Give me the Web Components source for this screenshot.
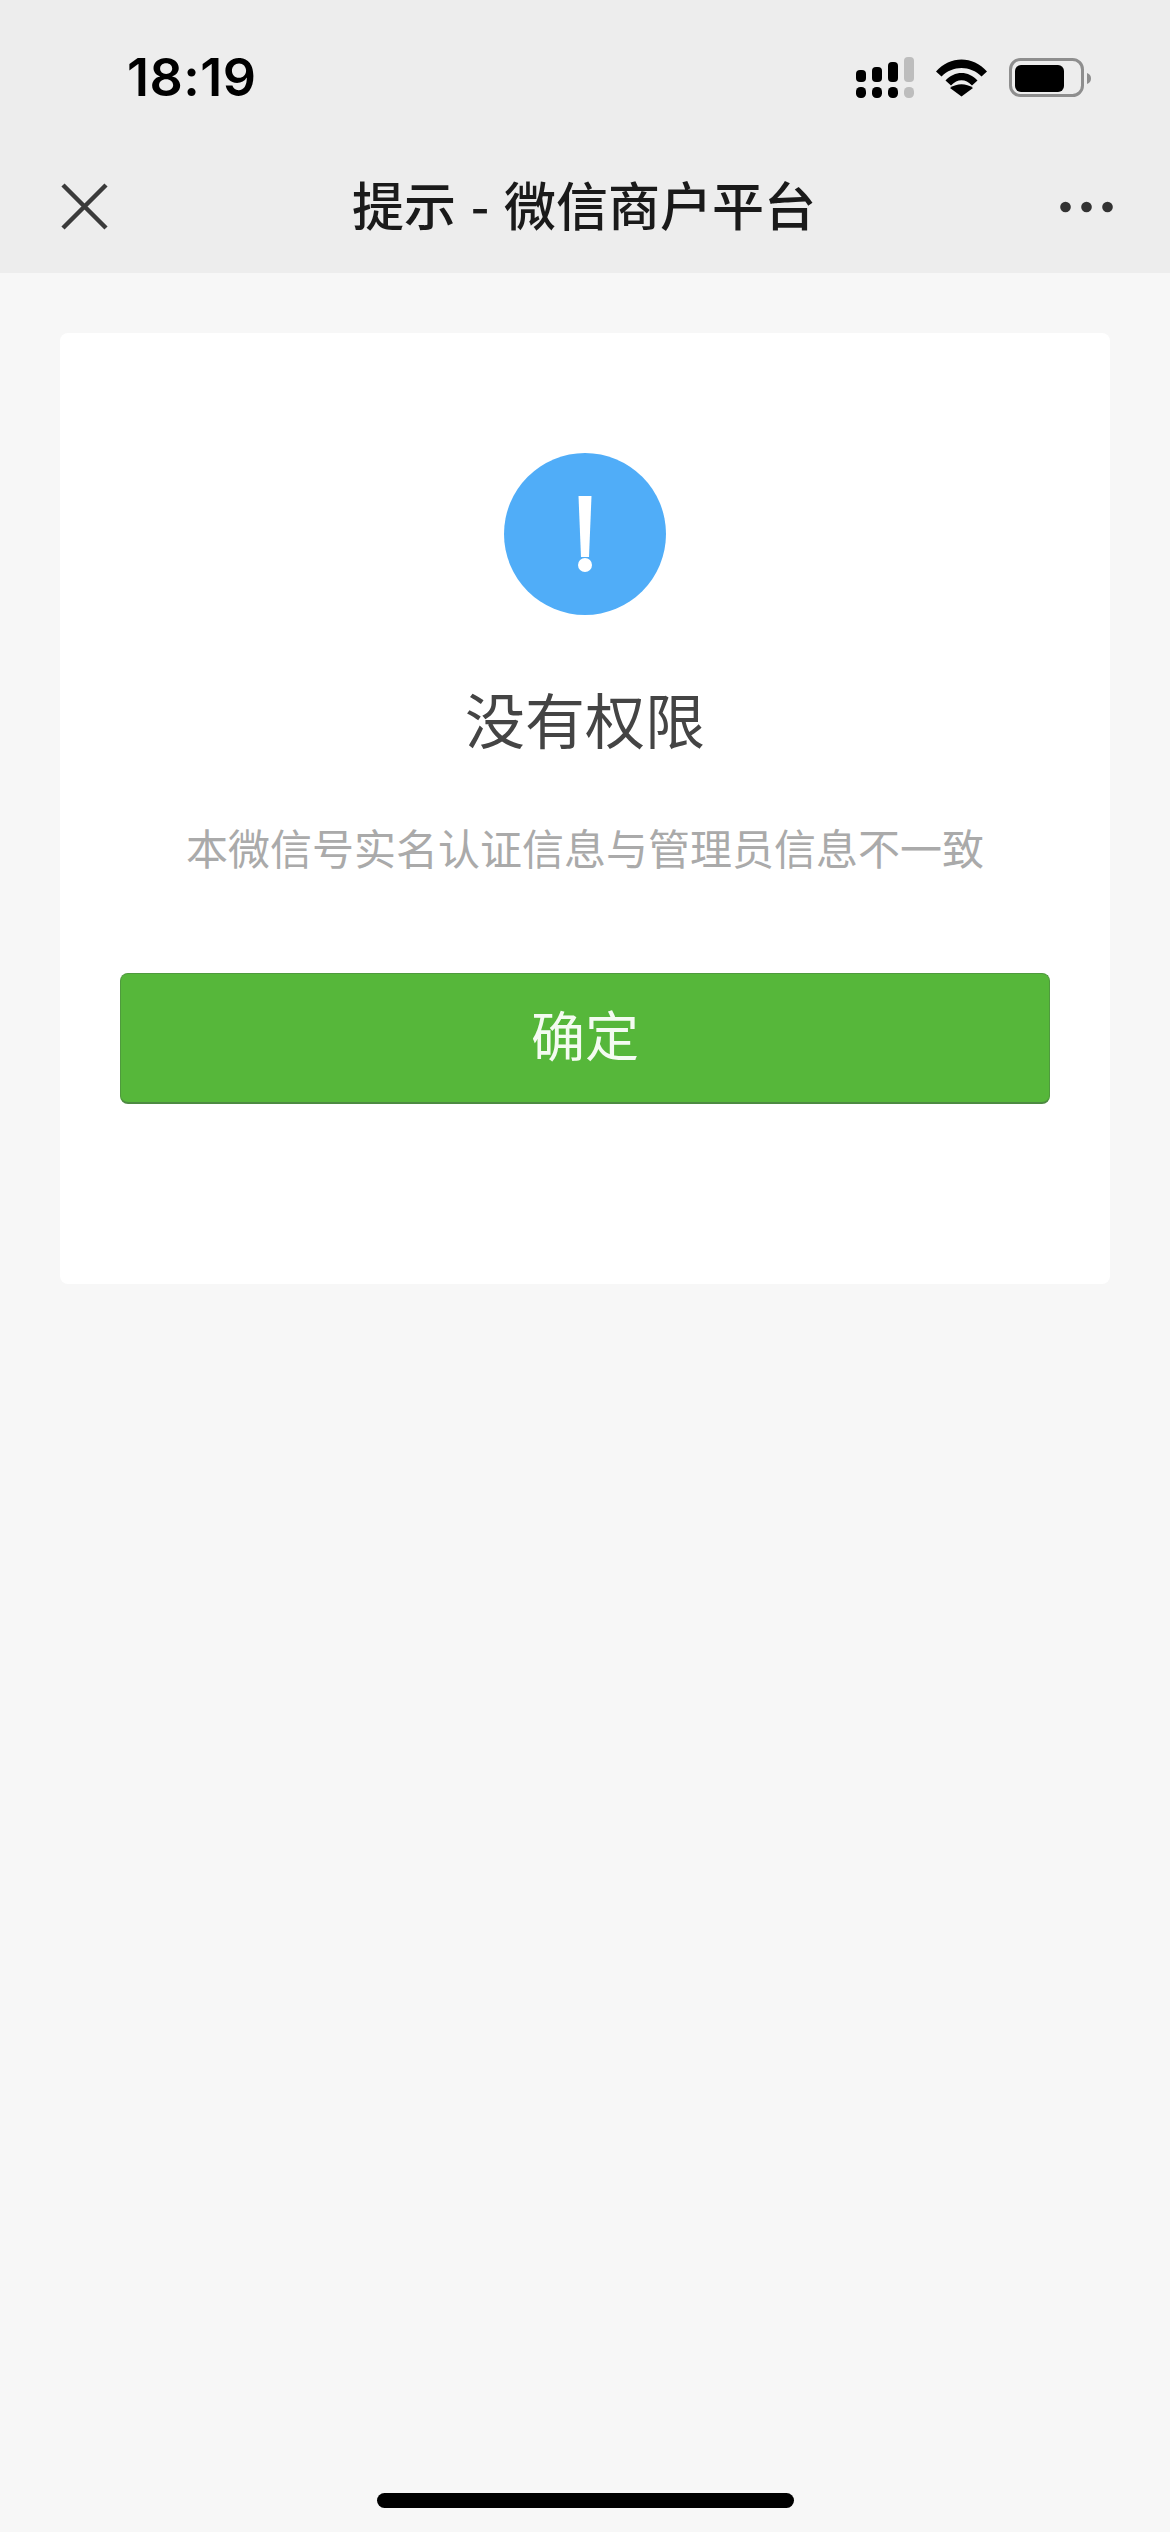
<!DOCTYPE html>
<html lang="zh-CN">
<head>
<meta charset="utf-8">
<title>提示 - 微信商户平台</title>
<style>
    html, body { margin: 0; padding: 0; background: #f7f7f7; }
    body { font-family: Inter, "Noto Sans CJK SC", sans-serif; }
</style>
</head>
<body>
<wx-page>
    <wx-status-bar slot="top" time="18:19"></wx-status-bar>
    <wx-nav-bar slot="top">提示 - 微信商户平台</wx-nav-bar>
    <wx-msg-card heading="没有权限">
        本微信号实名认证信息与管理员信息不一致
        <wx-button slot="action">确定</wx-button>
    </wx-msg-card>
</wx-page>

<script>
class WxPage extends HTMLElement {
    constructor() {
        super();
        const shadow = this.attachShadow({ mode: 'open' });
        shadow.innerHTML = `
        <style>
            :host { display: flex; flex-direction: column; min-height: 2532px; background: #f7f7f7; }
            #top { background: #ededed; height: 273px; display: flex; flex-direction: column; }
            #main { flex: 1; padding: 60px 60px 0; }
            #home { display: flex; justify-content: center; padding-bottom: 24px; }
            #home div { width: 417px; height: 15px; border-radius: 8px; background: #000; }
        </style>
        <div id="top"><slot name="top"></slot></div>
        <div id="main"><slot></slot></div>
        <div id="home"><div></div></div>
        `;
    }
}

class WxStatusBar extends HTMLElement {
    constructor() {
        super();
        const shadow = this.attachShadow({ mode: 'open' });
        shadow.innerHTML = `
        <style>
            :host { display: flex; align-items: flex-start; justify-content: space-between; height: 150px; padding: 0 79px 0 127px; }
            #time { font: 600 52px/52px Inter, sans-serif; color: #000; margin-top: 52px; letter-spacing: 0.5px; }
            #icons { display: flex; gap: 22px; margin-top: 57px; }
            svg { display: block; }
        </style>
        <div id="time">${this.getAttribute('time')}</div>
        <div id="icons">
            <svg width="58" height="41" viewBox="0 0 58 41">
                <rect x="0" y="13" width="10" height="12" rx="4"/>
                <rect x="16" y="10" width="10" height="15" rx="4"/>
                <rect x="32" y="5" width="10" height="20" rx="4"/>
                <rect x="48" y="0" width="10" height="25" rx="4" fill="#bdbdbd"/>
                <rect x="0" y="30" width="10" height="11" rx="4.5"/>
                <rect x="16" y="30" width="10" height="11" rx="4.5"/>
                <rect x="32" y="30" width="10" height="11" rx="4.5"/>
                <rect x="48" y="30" width="10" height="11" rx="4.5" fill="#bdbdbd"/>
            </svg>
            <svg width="51" height="41" viewBox="0 0 51 41" style="margin-top:2px">
                <path d="M0 12.5 C14 -3.5 37 -3.5 51 12.5 L45.5 17.5 C34.5 6 16.5 6 5.500 17.500 Z"/>
                <path d="M9.500 21.500 C18.500 11.500 32.500 11.500 41.500 21.500 L36 26.500 C29.500 19.500 21.500 19.500 15 26.500 Z"/>
                <path d="M25.500 37.500 L14 29 C21 24 30 24 37 29 Z" />
            </svg>
            <svg width="82" height="41" viewBox="0 0 82 41" style="margin-top:1px">
                <rect x="1.500" y="1.500" width="72" height="36" rx="10" fill="none" stroke="#8e8e8e" stroke-width="3"/>
                <rect x="6" y="7" width="49" height="27" rx="6"/>
                <path d="M78 15 C81 16 82 18 82 20.500 C82 23 81 25 78 26 Z" fill="#8e8e8e"/>
            </svg>
        </div>
        `;
    }
}

class WxNavBar extends HTMLElement {
    constructor() {
        super();
        const shadow = this.attachShadow({ mode: 'open' });
        shadow.innerHTML = `
        <style>
            :host { display: flex; align-items: center; justify-content: space-between; height: 113px; padding: 0 57px 10px 61px; font: 500 52px/60px "Noto Sans CJK SC", sans-serif; color: #1a1a1a; }
            svg { display: block; flex: none; }
            #title { flex: 1; text-align: center; padding: 0 0 6px 0; word-spacing: 3px; }
        </style>
        <svg width="47" height="47" viewBox="0 0 47 47" fill="none" stroke="#3a3a3a" stroke-width="4.500">
            <path d="M2 2 L45 45 M45 2 L2 45"/>
        </svg>
        <div id="title"><slot></slot></div>
        <svg width="53" height="12" viewBox="0 0 53 12" fill="#333">
            <circle cx="5.500" cy="6" r="5.300"/>
            <circle cx="26.500" cy="6" r="5.300"/>
            <circle cx="47.500" cy="6" r="5.300"/>
        </svg>
        `;
    }
}

class WxMsgCard extends HTMLElement {
    constructor() {
        super();
        const shadow = this.attachShadow({ mode: 'open' });
        shadow.innerHTML = `
        <style>
            :host { display: block; background: #fff; border-radius: 8px; padding: 120px 60px 180px; text-align: center; font-family: "Noto Sans CJK SC", sans-serif; }
            svg { display: block; margin: 0 auto; }
            #heading { margin-top: 63px; font-size: 60px; line-height: 80px; color: #444; font-weight: 400; }
            #desc { margin-top: 59px; font-size: 42px; line-height: 60px; color: #aaa; white-space: nowrap; }
            #action { margin-top: 96px; }
        </style>
        <svg width="162" height="162" viewBox="0 0 162 162">
            <circle cx="81" cy="81" r="81" fill="#50adf8"/>
            <path d="M74.500 43 H87.500 L85 104 H77 Z" fill="#fff"/>
            <circle cx="81" cy="112" r="7" fill="#fff"/>
        </svg>
        <div id="heading">${this.getAttribute('heading')}</div>
        <div id="desc"><slot></slot></div>
        <div id="action"><slot name="action"></slot></div>
        `;
    }
}

class WxButton extends HTMLElement {
    constructor() {
        super();
        const shadow = this.attachShadow({ mode: 'open' });
        shadow.innerHTML = `
        <style>
            :host { display: flex; align-items: center; justify-content: center; height: 131px; box-sizing: border-box; padding-bottom: 9px; background: #56b73a; border: 1px solid #4f9a3d; border-bottom: 2px solid #4d8a42; border-radius: 8px; color: #f4fbf1; font: 400 54px/60px "Noto Sans CJK SC", sans-serif; }
        </style>
        <slot></slot>
        `;
    }
}

customElements.get('wx-page') || customElements.define('wx-page', WxPage);
customElements.get('wx-status-bar') || customElements.define('wx-status-bar', WxStatusBar);
customElements.get('wx-nav-bar') || customElements.define('wx-nav-bar', WxNavBar);
customElements.get('wx-msg-card') || customElements.define('wx-msg-card', WxMsgCard);
customElements.get('wx-button') || customElements.define('wx-button', WxButton);
</script>
</body>
</html>
